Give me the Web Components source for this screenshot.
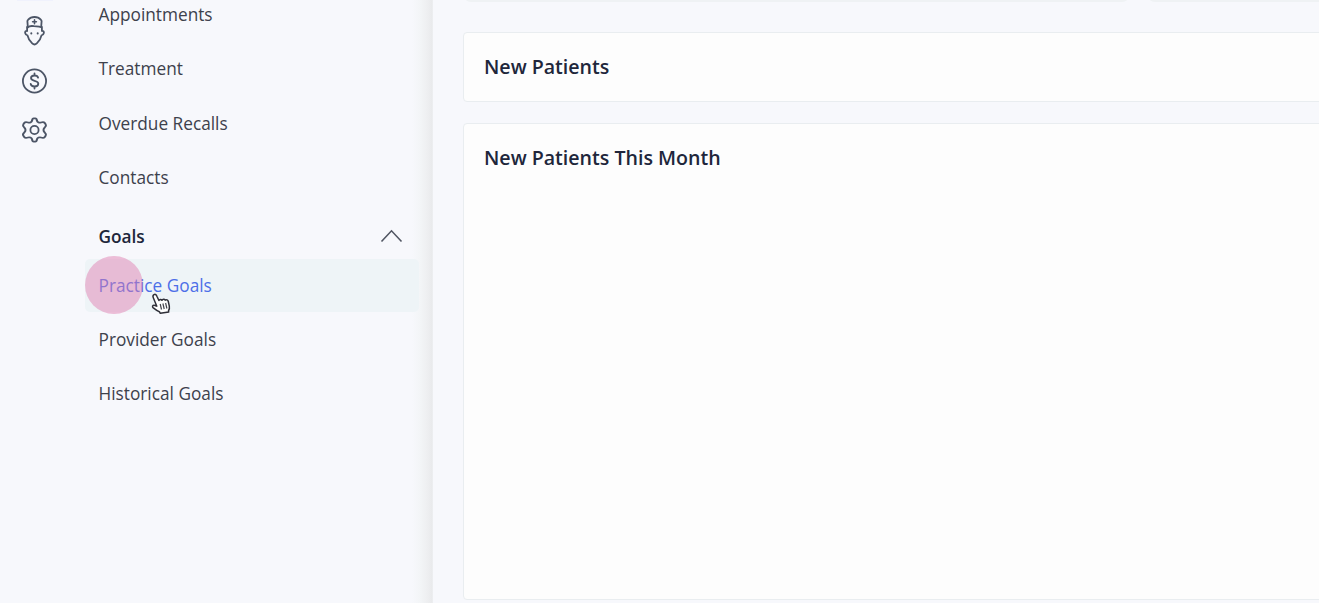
<!DOCTYPE html>
<html lang="en">
<head>
<meta charset="utf-8">
<title>Practice dashboard</title>
<style>
html,body{margin:0;height:100%;overflow:hidden;background:#f7f8fc}
body{font-family:"Open Sans","Noto Sans",sans-serif}
</style>
</head>
<body>
<practice-app></practice-app>
<script>
const define = (name, html) => customElements.define(name, class extends HTMLElement {
  constructor() {
    super();
    const t = document.createElement('template');
    t.innerHTML = html;
    this.attachShadow({mode: 'open'}).append(t.content.cloneNode(true));
  }
});

define('rail-icons', `
<style>
:host{display:flex;flex-direction:column;align-items:center;width:68px;margin-right:1px;flex:none;box-sizing:border-box;position:relative;padding-top:16px;gap:21.400px}
:host::before{content:"";position:absolute;top:0;left:17px;width:36px;height:1px;background:#f0f2fd}
svg{width:29px;height:28px;fill:none;stroke:#4c5566;stroke-width:1.800;stroke-linecap:round;stroke-linejoin:round;display:block}
svg.nurse{height:30px;margin-bottom:-.4px}
</style>
<svg class="nurse" viewBox="0 0 28 30">
<path d="M7.300 10.600 6.900 5.200Q7 4.300 7.700 3.600C9.300 1.800 11.500 1 14 1s4.700.8 6.300 2.600Q21 4.300 21.100 5.200L20.700 10.600"/>
<path d="M7.100 11.500C8.700 9.900 11 9.800 13.500 10.200c2.500.3 4.800-.2 7.200 1"/>
<path d="M6.600 10.800v4.200c-1.500-.2-2.200.7-1.900 2 .3 1.500 1 2.300 2.300 2.400.6 3.200 2.300 5.700 4.700 8 1.400 1.300 3.200 1.300 4.600 0 2.400-2.300 4.100-4.800 4.700-8 1.300-.1 2-.9 2.300-2.400.3-1.300-.4-2.200-1.900-2v-4.200"/>
<path d="M14 3.900v3.800M12.100 5.800h3.800" stroke-width="1.600"/>
<path d="M10.800 17.200v.2M17.200 17.200v.2" stroke-width="2"/>
</svg>
<svg viewBox="0 0 28 28"><circle cx="14" cy="14" r="11.600"/><path d="M17.600 10.700c-.3-1.400-1.700-2.200-3.600-2.200-2.100 0-3.500 1-3.500 2.600 0 3.900 7.300 1.700 7.300 5.700 0 1.700-1.500 2.700-3.700 2.700-2.200 0-3.700-1-3.900-2.600M14 6.500v2M14 19.500v2"/></svg>
<svg viewBox="0 0 28 28"><circle cx="14" cy="14" r="4.100"/><path transform="translate(-1.820 .42) scale(1.130 .97)" d="M11.800 4.500c.2-1.700.7-2.500 1.500-2.500h1.400c.8 0 1.300.8 1.500 2.500.3 1.500 2.100 2.400 3.500 1.800 1.700-.7 2.700-.6 3.400.5l.8 1.400c.6 1.100.4 2-.8 3.200-1.500 1.300-1.500 3.900 0 5.200 1.200 1.200 1.400 2.100.8 3.200l-.8 1.400c-.7 1.100-1.700 1.200-3.400.5-1.400-.6-3.200.3-3.500 1.800-.2 1.700-.7 2.500-1.500 2.500h-1.400c-.8 0-1.300-.8-1.500-2.500-.3-1.500-2.100-2.400-3.500-1.800-1.700.7-2.700.6-3.400-.5l-.8-1.400c-.6-1.100-.4-2 .8-3.200 1.500-1.300 1.500-3.900 0-5.200-1.200-1.200-1.400-2.100-.8-3.200l.8-1.400c.7-1.100 1.700-1.200 3.400-.5 1.400.6 3.200-.3 3.500-1.800Z"/></svg>
`);

define('nav-item', `
<style>
:host{display:flex;align-items:center;height:54.2px;box-sizing:border-box;padding-left:13.500px;font-size:17.250px;color:#3d414c;white-space:nowrap;position:relative}
:host([active]){color:#4c6fe8}
:host([active])::before{content:"";position:absolute;inset:1px 0 1px 0;background:#eef4f7;border-radius:5px}
span{position:relative;margin-top:-.6px}
</style>
<span><slot></slot></span><slot name="over"></slot>
`);

define('nav-group', `
<style>
:host{display:flex;align-items:center;justify-content:space-between;height:44px;margin-top:9.700px;padding:0 16px 0 13.500px;font-size:17.250px;font-weight:600;color:#20263a}
span{margin-top:-.2px}
svg{width:23px;height:14px;fill:none;stroke:#515663;stroke-width:1.600;display:block}
</style>
<span><slot></slot></span>
<svg viewBox="0 0 23 14"><path d="M1.500 12.500 11.500 1.800 21.500 12.500"/></svg>
`);

define('click-pointer', `
<style>
:host{position:absolute;left:0;top:-2px;width:90px;height:64px;pointer-events:none}
i{position:absolute;left:0;top:0;width:58px;height:58px;border-radius:50%;background:rgba(224,123,174,.47)}
svg{position:absolute;left:66px;top:37px;width:20px;height:22px}
</style>
<i></i>
<svg viewBox="0 0 20 22"><path d="M3 1.600C4.400.8 5.300 1.800 5.900 3.200L7.900 7.500C8.400 6.400 10.200 6.200 10.900 7.300 11.600 6 13.400 5.900 14.200 7.100 15.500 6.200 16.900 7 17.300 8.500L18.300 13.200C18.700 15 18.300 16.300 17.500 17.800L17.700 19 9.300 20.300 8.400 18.700C6.600 18 4.500 16.600 2 14.600 1.100 13.700 1.600 12.200 3 12.200 4.100 12.200 5 12.800 5.800 13.200L2.300 4.800C1.700 3.500 1.900 2.300 3 1.600Z" fill="#fff" stroke="#303039" stroke-width="1.500" stroke-linejoin="round"/><path d="M9.200 11l1.300 5.500M11.900 10.500l1.300 5.500M14.600 10l1.300 5.500" stroke="#44444c" stroke-width="1.200" fill="none"/></svg>
`);

define('side-menu', `
<style>
:host{display:block;box-sizing:border-box;width:364px;flex:none;padding:0 14px 0 16px;background:linear-gradient(90deg,transparent 343px,#f3f5f7 351px,#eeeff1 358px,#e9eaec 363px,#eff1f3 364px)}
nav{margin-top:-12px}
</style>
<nav>
<nav-item>Appointments</nav-item>
<nav-item>Treatment</nav-item>
<nav-item>Overdue Recalls</nav-item>
<nav-item>Contacts</nav-item>
<nav-group>Goals</nav-group>
<nav-item active>Practice Goals<click-pointer slot="over"></click-pointer></nav-item>
<nav-item>Provider Goals</nav-item>
<nav-item>Historical Goals</nav-item>
</nav>
`);

define('info-card', `
<style>
:host{display:block;box-sizing:border-box;background:#fdfdfd;border:1px solid #e9edf0;border-radius:4px;padding:20px;font-size:19.600px;line-height:28px;font-weight:600;color:#20263b;white-space:nowrap}
</style>
<slot></slot>
`);

define('dash-main', `
<style>
:host{display:flex;flex-direction:column;flex:1;min-width:0;padding-left:30px}
.top{display:grid;grid-template-columns:667px 1fr;gap:17px;margin-top:-38px;margin-right:-20px}
.top info-card{height:40px;padding:0;border-width:2px;border-color:#eff2f4;border-radius:8px}
.stack{display:flex;flex-direction:column;gap:21px;margin-top:30px;margin-right:-20px}
.small{height:70px}
.large{height:477px}
</style>
<div class="top"><info-card></info-card><info-card></info-card></div>
<div class="stack">
<info-card class="small">New Patients</info-card>
<info-card class="large">New Patients This Month</info-card>
</div>
`);

define('practice-app', `
<style>
:host{display:flex;width:100vw;height:100vh;overflow:hidden;background:#f7f8fc}
</style>
<rail-icons></rail-icons><side-menu></side-menu><dash-main></dash-main>
`);
</script>
</body>
</html>
